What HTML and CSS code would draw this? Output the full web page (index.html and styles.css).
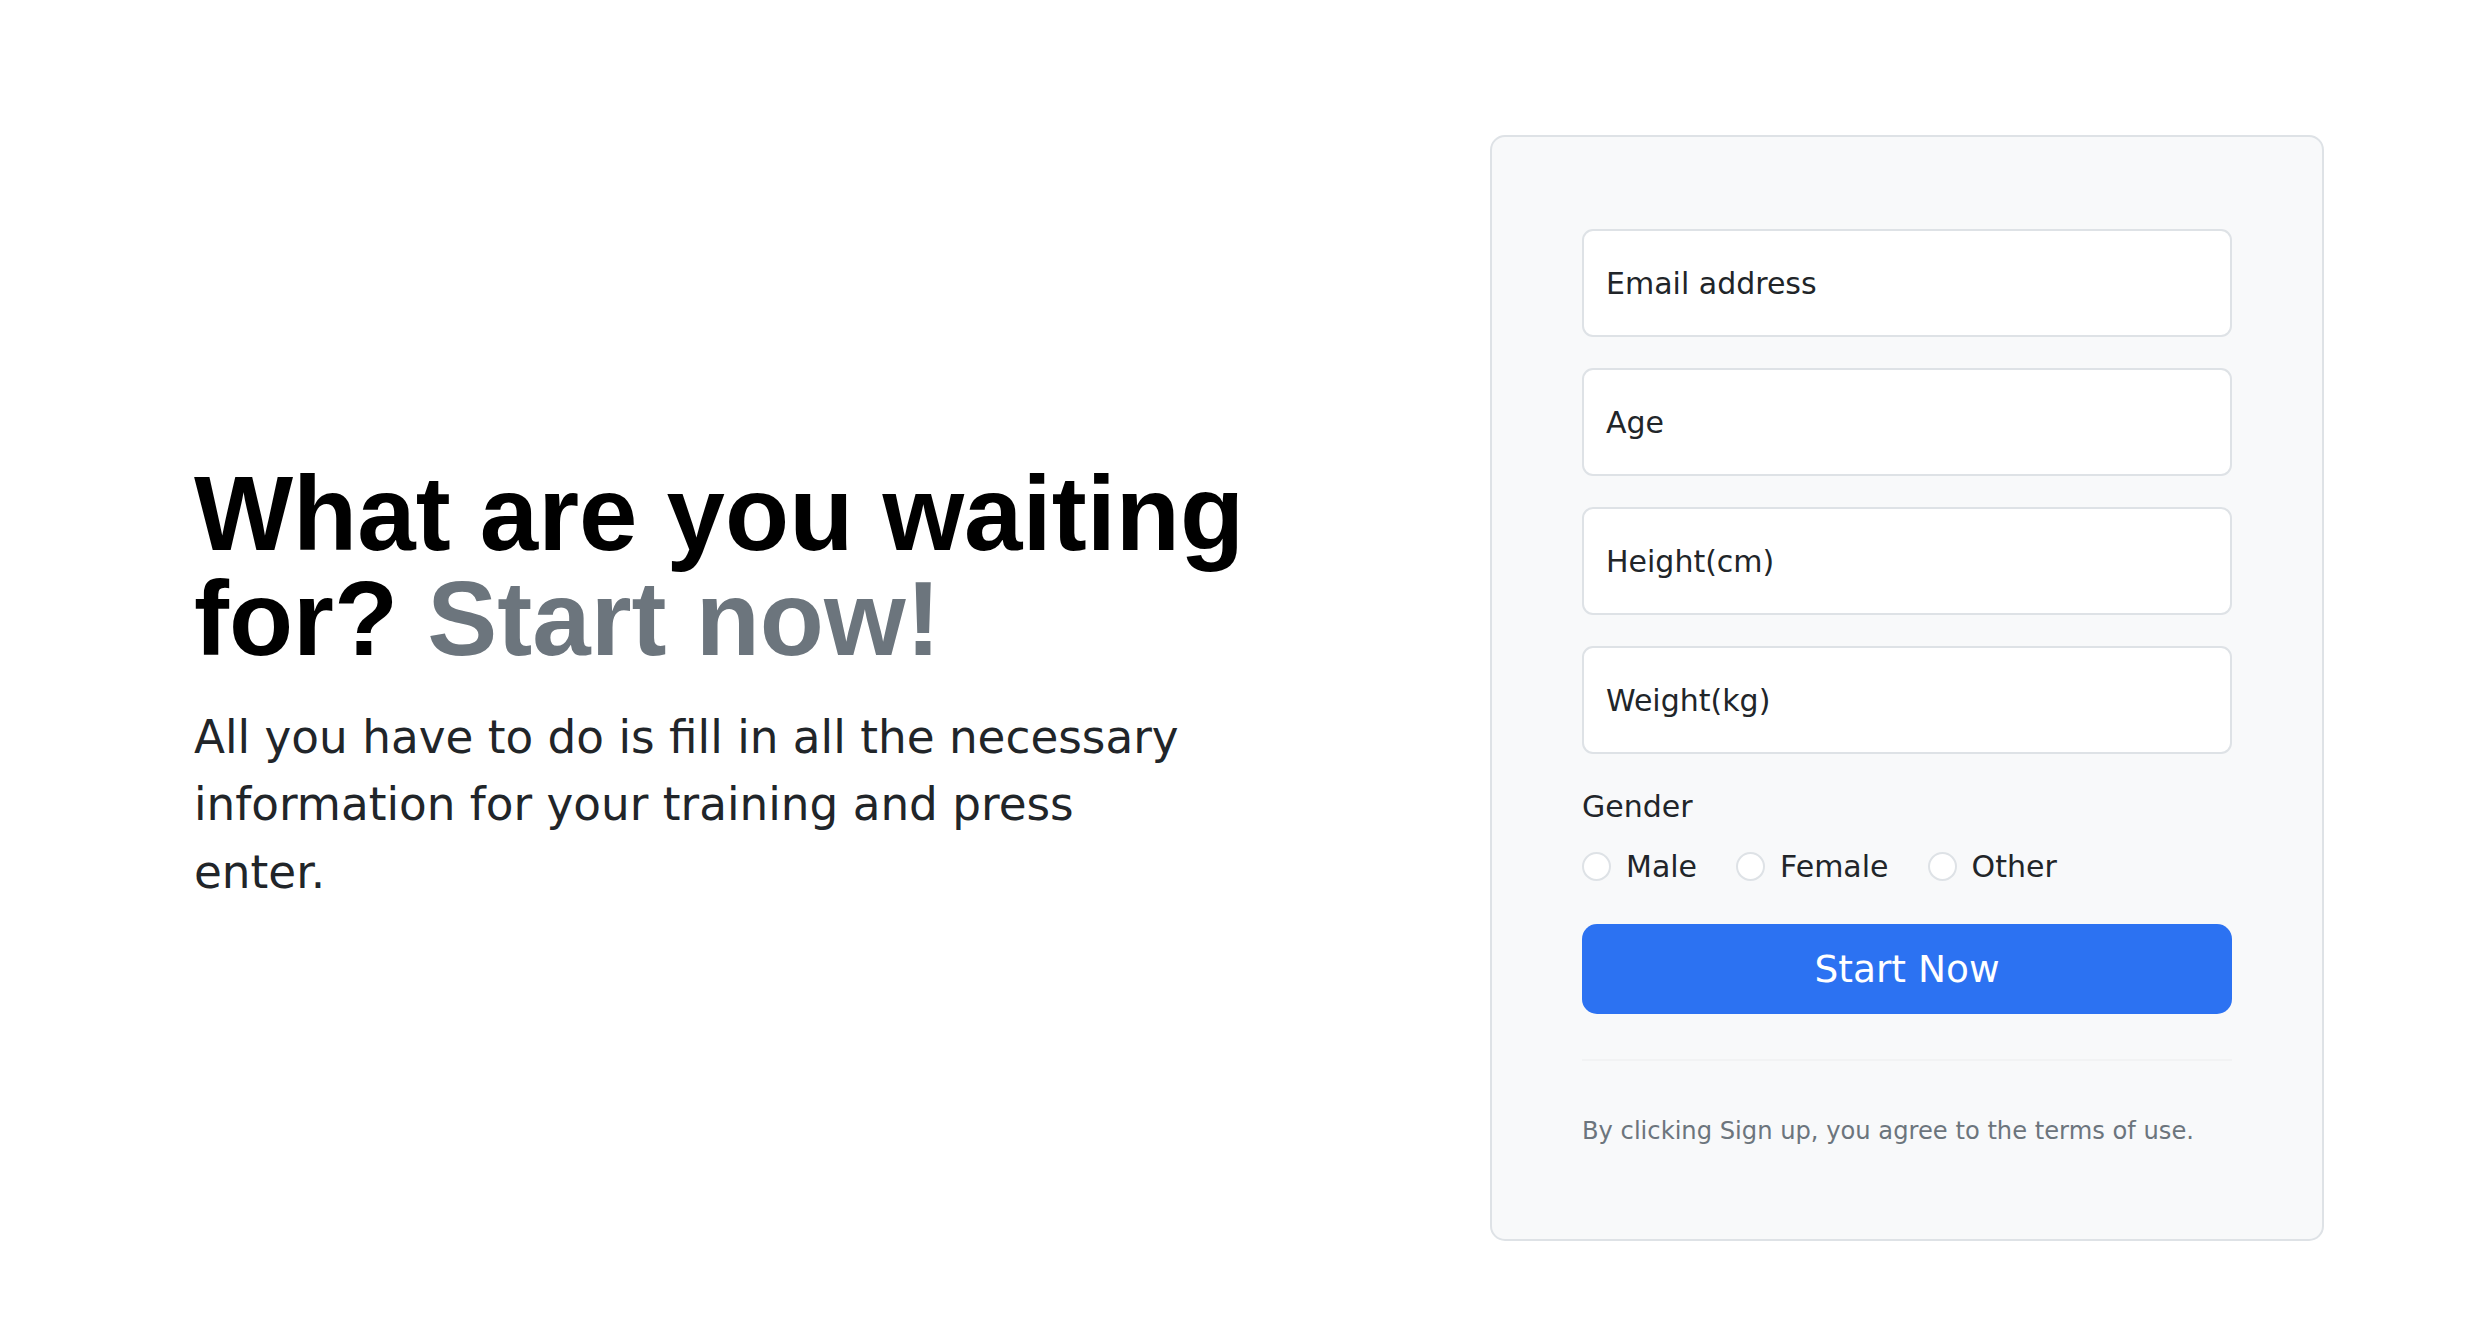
FILE: index.html
```html
<!DOCTYPE html>
<html lang="en">
<head>
<meta charset="utf-8">
<title>Start now</title>
<link rel="stylesheet" href="styles.css">
</head>
<body>
<main class="hero">
  <section class="intro">
    <h1 class="headline">What are you waiting for? <span class="muted">Start now!</span></h1>
    <p class="lead">All you have to do is fill in all the necessary information for your training and press enter.</p>
  </section>
  <form class="card">
    <div class="field"><label class="field-label">Email address</label></div>
    <div class="field"><label class="field-label">Age</label></div>
    <div class="field"><label class="field-label">Height(cm)</label></div>
    <div class="field"><label class="field-label">Weight(kg)</label></div>
    <div class="group-label">Gender</div>
    <div class="radios">
      <label class="radio"><input type="radio" name="gender" class="radio-input"><span>Male</span></label>
      <label class="radio"><input type="radio" name="gender" class="radio-input"><span>Female</span></label>
      <label class="radio"><input type="radio" name="gender" class="radio-input"><span>Other</span></label>
    </div>
    <button type="button" class="btn">Start Now</button>
    <hr class="divider">
    <small class="terms">By clicking Sign up, you agree to the terms of use.</small>
  </form>
</main>
</body>
</html>
```
FILE: styles.css
```css
html, body {
  margin: 0;
  padding: 0;
  background: #fff;
}

body {
  font-family: "DejaVu Sans", sans-serif;
  font-size: 30px;
  line-height: 1.5;
  color: #212529;
}

.hero {
  display: flex;
  align-items: center;
  justify-content: space-between;
  box-sizing: border-box;
  height: 1336px;
  padding: 135px 152px 95px 194px;
}

.intro {
  width: 1204px;
  padding-bottom: 9px;
}

.headline {
  margin: 0 0 33px;
  font-family: "Liberation Sans", Arial, sans-serif;
  font-weight: 700;
  font-size: 105px;
  line-height: 1;
  color: #000;
}

.muted {
  color: #6c757d;
}

.lead {
  margin: 0;
  max-width: 1010px;
  font-size: 45.3px;
  line-height: 67.5px;
  color: #212529;
}

.card {
  box-sizing: border-box;
  width: 834px;
  flex-shrink: 0;
  display: flex;
  flex-direction: column;
  padding: 92px 90px 88px;
  background: #f8f9fa;
  border: 2px solid #dee2e6;
  border-radius: 15px;
}

.field {
  box-sizing: border-box;
  height: 108px;
  margin-bottom: 31px;
  display: flex;
  align-items: center;
  padding: 0 22px;
  background: #fff;
  border: 2px solid #dee2e6;
  border-radius: 11px;
}

.field-label {
  font-size: 30px;
  color: #212529;
}

.group-label {
  margin-top: -1px;
  margin-bottom: 15px;
  line-height: 45px;
}

.radios {
  display: flex;
  height: 45px;
  gap: 39px;
  margin-bottom: 35px;
}

.radio {
  display: flex;
  align-items: flex-start;
  line-height: 45px;
}

.radio-input {
  appearance: none;
  -webkit-appearance: none;
  box-sizing: border-box;
  width: 29px;
  height: 29px;
  margin: 8px 15px 0 0;
  border: 2px solid #dee2e6;
  border-radius: 50%;
  background: #fff;
}

.btn {
  height: 90px;
  border: none;
  border-radius: 15px;
  background: #2c72f2;
  color: #fff;
  font-family: "DejaVu Sans", sans-serif;
  font-size: 37.5px;
  line-height: 1.5;
}

.divider {
  margin: 45px 0 51px;
  border: none;
  border-top: 2px solid #f2f3f4;
  height: 0;
}

.terms {
  display: block;
  font-size: 24.2px;
  line-height: 39px;
  color: #6c757d;
}
```
